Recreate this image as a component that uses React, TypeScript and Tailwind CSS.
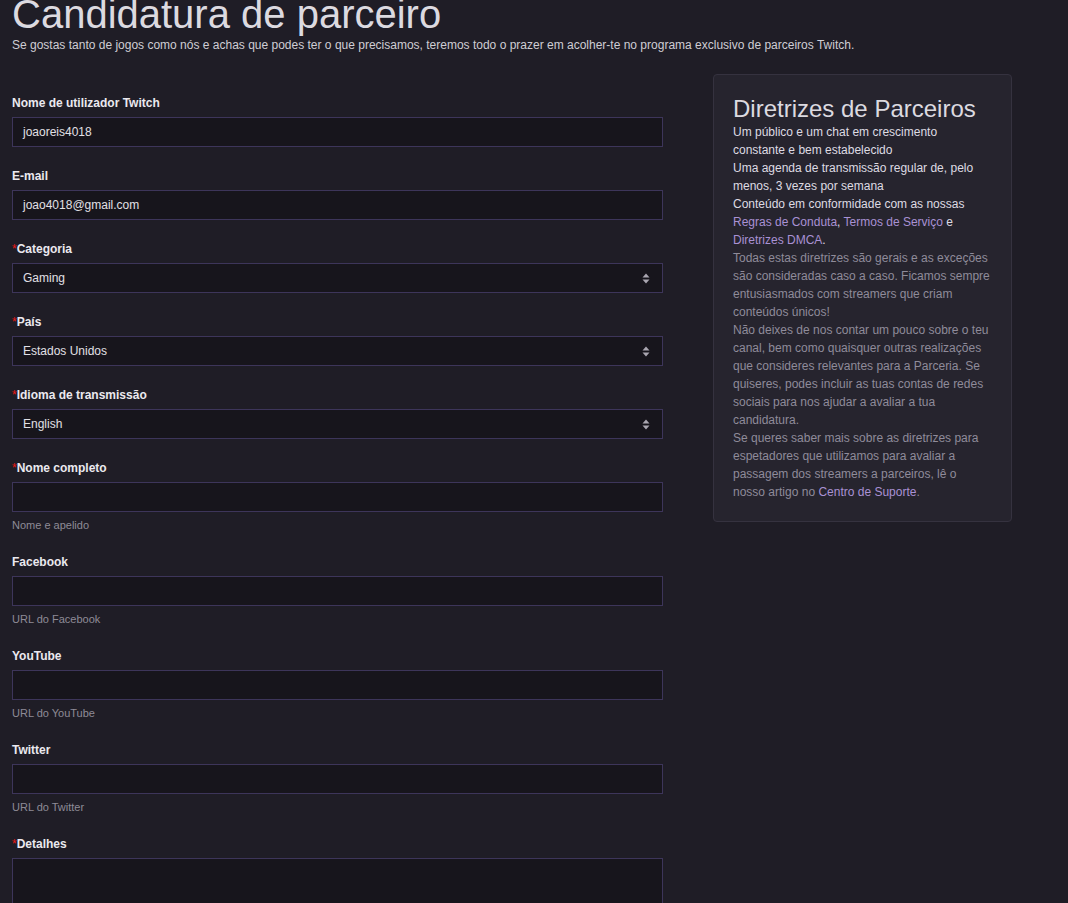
const fields: { label: string; value?: string; required?: boolean; select?: boolean; hint?: string }[] = [
  { label: 'Nome de utilizador Twitch', value: 'joaoreis4018' },
  { label: 'E-mail', value: 'joao4018@gmail.com' },
  { label: 'Categoria', value: 'Gaming', required: true, select: true },
  { label: 'País', value: 'Estados Unidos', required: true, select: true },
  { label: 'Idioma de transmissão', value: 'English', required: true, select: true },
  { label: 'Nome completo', required: true, hint: 'Nome e apelido' },
  { label: 'Facebook', hint: 'URL do Facebook' },
  { label: 'YouTube', hint: 'URL do YouTube' },
  { label: 'Twitter', hint: 'URL do Twitter' },
]

function SelectArrows() {
  return (
    <svg width="8" height="11" viewBox="0 0 8 11" className="shrink-0">
      <path d="M4 0.5 L7.5 4.5 H0.5 Z" fill="#a9a6b0" />
      <path d="M4 10.5 L7.5 6.5 H0.5 Z" fill="#a9a6b0" />
    </svg>
  )
}

function Label({ text, required }: { text: string; required?: boolean }) {
  return (
    <div className="text-[12px] leading-[14px] font-bold text-[#ebe9ef]">
      {required && <span className="text-[#e91916] font-normal">*</span>}
      {text}
    </div>
  )
}

function Field({ label, value, required, select, hint }: (typeof fields)[number]) {
  return (
    <div className="mb-[22px]">
      <Label text={label} required={required} />
      <div className="mt-[7px] flex h-[30px] items-center justify-between border border-[#3d355a] bg-[#17151c] pl-[10px] pr-[12px] text-[12px] text-[#e2e0e6]">
        <span>{value}</span>
        {select && <SelectArrows />}
      </div>
      {hint && <div className="mt-[6px] pb-[1px] text-[11px] leading-[14px] text-[#8e8b96]">{hint}</div>}
    </div>
  )
}

export default function App() {
  return (
    <div
      className="min-h-[903px] overflow-hidden bg-[#1f1d26] px-[12px] text-[#e2e0e6]"
      style={{ fontFamily: '"Liberation Sans", Arial, sans-serif' }}
    >
      <h1 className="-mt-[6px] text-[40px] leading-[40px] text-[#dcdae0]">Candidatura de parceiro</h1>
      <p className="mt-[4px] text-[12px] leading-[14px] text-[#cfcdd4]">
        Se gostas tanto de jogos como nós e achas que podes ter o que precisamos, teremos todo o prazer em acolher-te no
        programa exclusivo de parceiros Twitch.
      </p>

      <div className="mt-[22px] flex items-start gap-[50px]">
        <div className="w-[651px] shrink-0 pt-[22px]">
          {fields.map((f) => (
            <Field key={f.label} {...f} />
          ))}
          <div>
            <Label text="Detalhes" required />
            <div className="relative mt-[7px] h-[80px] border border-[#3d355a] bg-[#17151c]">
              <svg width="8" height="8" viewBox="0 0 8 8" className="absolute right-[1px] bottom-[1px]">
                <path d="M7 1 L1 7 M7 4 L4 7" stroke="#8e8b96" strokeWidth="1" />
              </svg>
            </div>
          </div>
        </div>

        <div className="w-[299px] shrink-0 rounded-[4px] border border-[#35323f] bg-[#26242e] pl-[19px] pr-[20px] pt-[19px] pb-[20px] text-[12px] leading-[18px]">
          <h2 className="text-[24px] leading-[29px] text-[#dcdae0]">Diretrizes de Parceiros</h2>
          <div className="text-[#dedbe3]">
            <p>Um público e um chat em crescimento constante e bem estabelecido</p>
            <p>Uma agenda de transmissão regular de, pelo menos, 3 vezes por semana</p>
            <p>
              Conteúdo em conformidade com as nossas <a className="text-[#a991d4]">Regras de Conduta</a>,{' '}
              <a className="text-[#a991d4]">Termos de Serviço</a> e <a className="text-[#a991d4]">Diretrizes DMCA</a>.
            </p>
          </div>
          <div className="text-[#8f8b9a]">
            <p>
              Todas estas diretrizes são gerais e as exceções são consideradas caso a caso. Ficamos sempre entusiasmados
              com streamers que criam conteúdos únicos!
            </p>
            <p>
              Não deixes de nos contar um pouco sobre o teu canal, bem como quaisquer outras realizações que consideres
              relevantes para a Parceria. Se quiseres, podes incluir as tuas contas de redes sociais para nos ajudar a
              avaliar a tua candidatura.
            </p>
            <p>
              Se queres saber mais sobre as diretrizes para espetadores que utilizamos para avaliar a passagem dos
              streamers a parceiros, lê o nosso artigo no <a className="text-[#a991d4]">Centro de Suporte</a>.
            </p>
          </div>
        </div>
      </div>
    </div>
  )
}
